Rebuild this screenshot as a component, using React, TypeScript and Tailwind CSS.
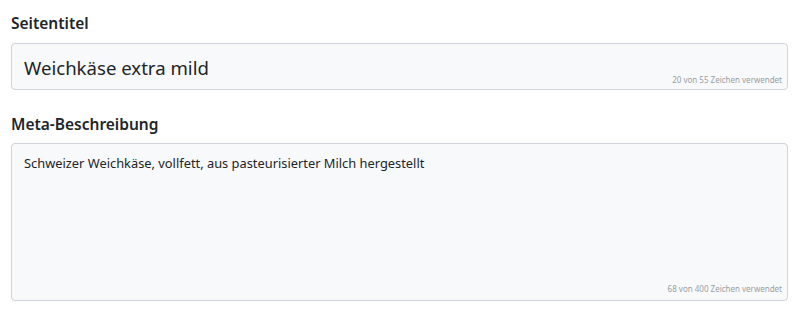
import React from "react";

export default function App() {
  return (
    <div className="w-[803px] h-[319px] bg-white pl-[11px] pr-[15px] pt-[11px]" style={{ fontFamily: '"Noto Sans", "Open Sans", sans-serif' }}>
      <div className="text-[15.5px] font-semibold text-[#212529] leading-[24px] mb-[8px]">Seitentitel</div>
      <div className="relative h-[47px] rounded-[4px] border border-[#ced4da] bg-[#f8f9fa]">
        <div className="pl-[12px] pt-[10px] text-[18.6px] leading-[28px] text-[#212529]">Weichkäse extra mild</div>
        <div className="absolute right-[5px] bottom-[4px] text-[8px] text-[#999ea3] leading-[10px]">20 von 55 Zeichen verwendet</div>
      </div>
      <div className="text-[15.5px] font-semibold text-[#212529] leading-[24px] mt-[22px] mb-[7px]">Meta-Beschreibung</div>
      <div className="relative h-[158px] rounded-[4px] border border-[#ced4da] bg-[#f8f9fa]">
        <div className="pl-[12px] pt-[9px] text-[12.85px] leading-[20px] text-[#212529]">Schweizer Weichkäse, vollfett, aus pasteurisierter Milch hergestellt</div>
        <div className="absolute right-[5px] bottom-[6px] text-[8px] text-[#999ea3] leading-[10px]">68 von 400 Zeichen verwendet</div>
      </div>
    </div>
  );
}
